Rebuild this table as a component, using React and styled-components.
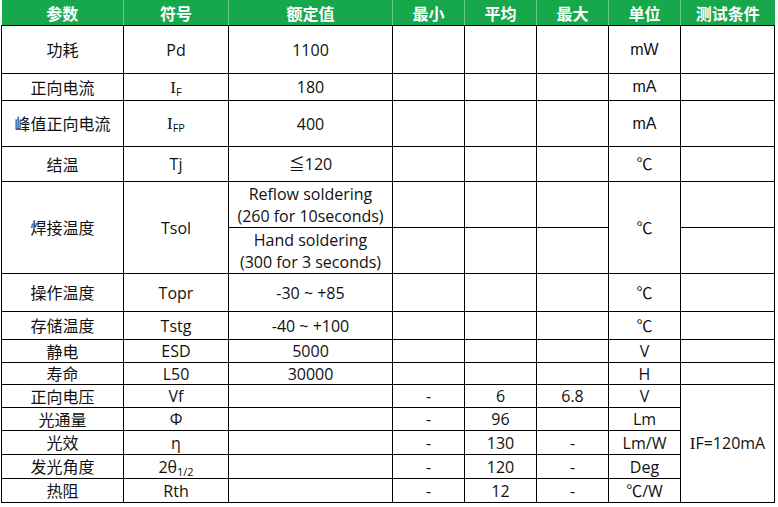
import React from "react";
import styled, { createGlobalStyle } from "styled-components";

const GlobalStyle = createGlobalStyle`
  html, body {
    margin: 0;
    padding: 0;
    background: #fff;
  }
  body {
    font-family: "Open Sans", "Noto Sans CJK SC", sans-serif;
    color: #111;
  }
`;

const cols = [122, 105, 164, 72, 72, 72, 72, 94];
const heads = ["参数", "符号", "额定值", "最小", "平均", "最大", "单位", "测试条件"];

const Wrap = styled.div`
  padding: 0 0 0 1px;
`;
const Table = styled.table`
  border-collapse: collapse;
  table-layout: fixed;
  width: 773px;
`;
const HeadCell = styled.th`
  background: #17a84c;
  color: #fff;
  font-family: "Noto Sans CJK SC", sans-serif;
  font-weight: 700;
  font-size: 16px;
  line-height: 20px;
  height: 25px;
  padding: 0;
  border-left: 1px solid #6cc98d;
  border-bottom: 1px solid #000;
  &:first-child {
    border-left: none;
  }
`;
const Row = styled.tr`
  height: ${(p) => p.h}px;
`;
const Cell = styled.td`
  border: 1px solid #000;
  padding: 0;
  text-align: center;
  vertical-align: middle;
  font-size: 16px;
  line-height: ${(p) => (p.two ? 22 : 18)}px;
  font-family: ${(p) =>
    p.arial ? `"Liberation Sans", sans-serif` : `"Open Sans", "Noto Sans CJK SC", sans-serif`};
`;
const Cn = styled.span`
  font-family: "Noto Sans CJK SC", sans-serif;
  font-size: 16px;
`;
const SerifI = styled.span`
  font-family: "Liberation Serif", serif;
  font-size: 17px;
`;
const Sub = styled.sub`
  font-size: 11px;
  vertical-align: -3px;
  line-height: 0;
`;

const Sym = ({ sub }) => (
  <>
    <SerifI>I</SerifI>
    <Sub>{sub}</Sub>
  </>
);

export default function App() {
  return (
    <Wrap>
      <GlobalStyle />
      <Table>
        <colgroup>
          {cols.map((w, i) => (
            <col key={i} style={{ width: w }} />
          ))}
        </colgroup>
        <thead>
          <tr>
            {heads.map((h) => (
              <HeadCell key={h}>{h}</HeadCell>
            ))}
          </tr>
        </thead>
        <tbody>
          <Row h={48}>
            <Cell><Cn>功耗</Cn></Cell>
            <Cell>Pd</Cell>
            <Cell>1100</Cell>
            <Cell /><Cell /><Cell />
            <Cell arial>mW</Cell>
            <Cell />
          </Row>
          <Row h={27}>
            <Cell><Cn>正向电流</Cn></Cell>
            <Cell><Sym sub="F" /></Cell>
            <Cell>180</Cell>
            <Cell /><Cell /><Cell />
            <Cell arial>mA</Cell>
            <Cell />
          </Row>
          <Row h={46}>
            <Cell><Cn>峰值正向电流</Cn></Cell>
            <Cell><Sym sub="FP" /></Cell>
            <Cell>400</Cell>
            <Cell /><Cell /><Cell />
            <Cell arial>mA</Cell>
            <Cell />
          </Row>
          <Row h={35}>
            <Cell><Cn>结温</Cn></Cell>
            <Cell>Tj</Cell>
            <Cell>≦120</Cell>
            <Cell /><Cell /><Cell />
            <Cell>℃</Cell>
            <Cell />
          </Row>
          <Row h={46}>
            <Cell rowSpan={2}><Cn>焊接温度</Cn></Cell>
            <Cell rowSpan={2}>Tsol</Cell>
            <Cell two>Reflow soldering<br />(260 for 10seconds)</Cell>
            <Cell /><Cell /><Cell />
            <Cell rowSpan={2}>℃</Cell>
            <Cell />
          </Row>
          <Row h={46}>
            <Cell two>Hand soldering<br />(300 for 3 seconds)</Cell>
            <Cell /><Cell /><Cell />
            <Cell />
          </Row>
          <Row h={38}>
            <Cell><Cn>操作温度</Cn></Cell>
            <Cell>Topr</Cell>
            <Cell>-30 ~ +85</Cell>
            <Cell /><Cell /><Cell />
            <Cell>℃</Cell>
            <Cell />
          </Row>
          <Row h={28}>
            <Cell><Cn>存储温度</Cn></Cell>
            <Cell>Tstg</Cell>
            <Cell>-40 ~ +100</Cell>
            <Cell /><Cell /><Cell />
            <Cell>℃</Cell>
            <Cell />
          </Row>
          <Row h={23}>
            <Cell><Cn>静电</Cn></Cell>
            <Cell>ESD</Cell>
            <Cell>5000</Cell>
            <Cell /><Cell /><Cell />
            <Cell>V</Cell>
            <Cell />
          </Row>
          <Row h={22}>
            <Cell><Cn>寿命</Cn></Cell>
            <Cell>L50</Cell>
            <Cell>30000</Cell>
            <Cell /><Cell /><Cell />
            <Cell>H</Cell>
            <Cell />
          </Row>
          <Row h={23}>
            <Cell><Cn>正向电压</Cn></Cell>
            <Cell>Vf</Cell>
            <Cell />
            <Cell>-</Cell>
            <Cell>6</Cell>
            <Cell>6.8</Cell>
            <Cell>V</Cell>
            <Cell rowSpan={5}>
              <SerifI>I</SerifI>F=120mA
            </Cell>
          </Row>
          <Row h={23}>
            <Cell><Cn>光通量</Cn></Cell>
            <Cell>Φ</Cell>
            <Cell />
            <Cell>-</Cell>
            <Cell>96</Cell>
            <Cell />
            <Cell>Lm</Cell>
          </Row>
          <Row h={24}>
            <Cell><Cn>光效</Cn></Cell>
            <Cell>η</Cell>
            <Cell />
            <Cell>-</Cell>
            <Cell>130</Cell>
            <Cell>-</Cell>
            <Cell>Lm/W</Cell>
          </Row>
          <Row h={24}>
            <Cell><Cn>发光角度</Cn></Cell>
            <Cell>2θ<Sub>1/2</Sub></Cell>
            <Cell />
            <Cell>-</Cell>
            <Cell>120</Cell>
            <Cell>-</Cell>
            <Cell>Deg</Cell>
          </Row>
          <Row h={24}>
            <Cell><Cn>热阻</Cn></Cell>
            <Cell>Rth</Cell>
            <Cell />
            <Cell>-</Cell>
            <Cell>12</Cell>
            <Cell>-</Cell>
            <Cell>℃/W</Cell>
          </Row>
        </tbody>
      </Table>
    </Wrap>
  );
}
